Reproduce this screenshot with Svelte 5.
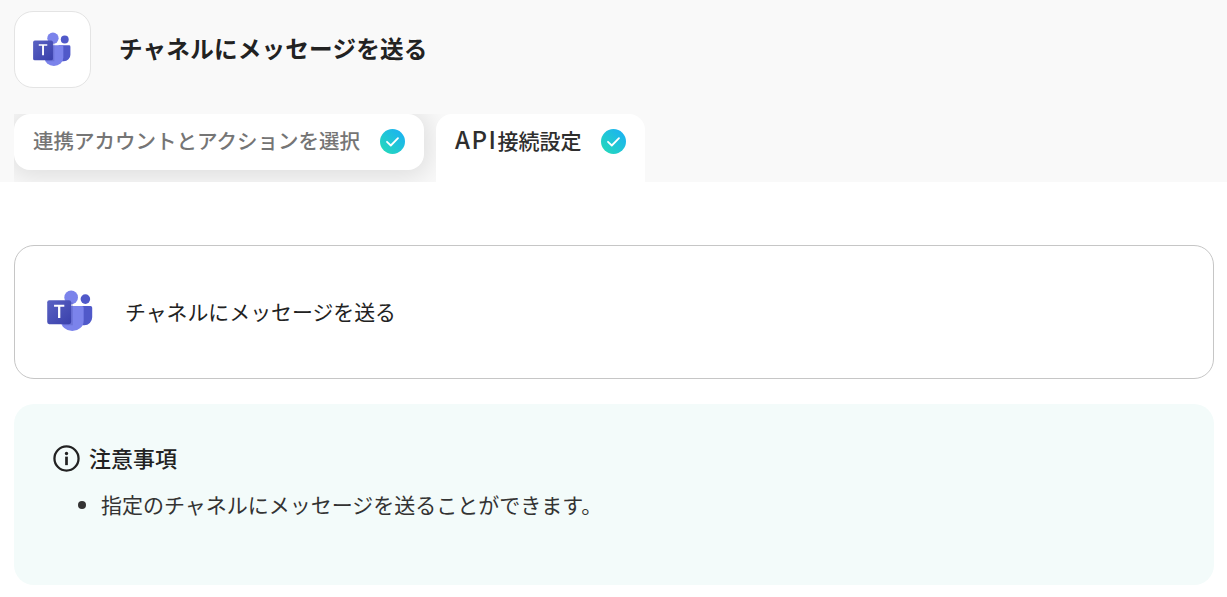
<script>
  const title = 'チャネルにメッセージを送る';
</script>

{#snippet teams()}
  <svg class="teams" viewBox="0 0 40 36" aria-hidden="true">
    <defs>
      <linearGradient id="tile" x1="0" y1="0" x2="1" y2="1">
        <stop offset="0" stop-color="#5a62c3" />
        <stop offset="1" stop-color="#3940ab" />
      </linearGradient>
    </defs>
    <circle cx="33.5" cy="8" r="4.2" fill="#5059c9" />
    <path d="M27 14h11a1.5 1.5 0 0 1 1.5 1.5V24a7 7 0 0 1-7 7H27z" fill="#5059c9" />
    <circle cx="21" cy="6.5" r="6" fill="#7b83eb" />
    <path d="M13 14h17.5a1.5 1.5 0 0 1 1.5 1.5V27a10 9 0 0 1-20 0V15z" fill="#7b83eb" />
    <path d="M12 11h10.5v20H14z" fill="#4a50ac" opacity="0.3" />
    <rect x="0" y="9" width="21" height="21" rx="1.8" fill="url(#tile)" />
    <path d="M15 14.6H11.5V24.5H9.5V14.6H6V13H15z" fill="#fff" />
  </svg>
{/snippet}

{#snippet check()}
  <svg class="check" viewBox="0 0 25 25" aria-hidden="true">
    <defs>
      <linearGradient id="tick" x1="0" y1="1" x2="1" y2="0">
        <stop offset="0.1" stop-color="#24d8bc" />
        <stop offset="0.9" stop-color="#1bb2f2" />
      </linearGradient>
    </defs>
    <circle cx="12.5" cy="12.5" r="12.5" fill="url(#tick)" />
    <path d="M7 12.8l3.8 3.7 7.2-7.4" fill="none" stroke="#fff" stroke-width="1.8" stroke-linecap="round" stroke-linejoin="round" />
  </svg>
{/snippet}

<header class="head">
  <div class="title-row">
    <div class="logo">{@render teams()}</div>
    <h1>{title}</h1>
  </div>
  <div class="tabs">
    <div class="tab">
      <span>連携アカウントとアクションを選択</span>
      {@render check()}
    </div>
    <div class="tab active">
      <span><span class="latin">API</span>接続設定</span>
      {@render check()}
    </div>
  </div>
</header>

<main class="body">
  <section class="action">
    {@render teams()}
    <p>{title}</p>
  </section>

  <section class="notice">
    <h2>
      <svg class="info" viewBox="0 0 26 26" aria-hidden="true">
        <circle cx="13" cy="13" r="11.6" fill="none" stroke="#222" stroke-width="2.2" />
        <circle cx="13" cy="8.2" r="1.6" fill="#222" />
        <rect x="11.7" y="11.2" width="2.6" height="8.2" fill="#222" />
      </svg>
      注意事項
    </h2>
    <ul>
      <li>指定のチャネルにメッセージを送ることができます。</li>
    </ul>
  </section>
</main>

<style>
  :global(body) {
    margin: 0;
    background: #fff;
    color: #2a2a2a;
    font-family: "Noto Sans CJK JP", "Noto Sans", sans-serif;
  }

  .head {
    height: 182px;
    padding: 11px 14px 0;
    box-sizing: border-box;
    background: #f9f9f9;
  }

  .title-row {
    display: flex;
    align-items: center;
    gap: 28px;
  }

  .logo {
    display: flex;
    align-items: center;
    justify-content: center;
    width: 77px;
    height: 77px;
    box-sizing: border-box;
    background: #fff;
    border: 1px solid #e4e4e4;
    border-radius: 19px;
  }

  .logo .teams {
    width: 38px;
    height: 34px;
    margin: 0 2px 2px 0;
  }

  h1 {
    margin: 0 0 4px;
    font-size: 23.6px;
    letter-spacing: 0.2px;
    font-weight: 700;
    color: #222;
  }

  .tabs {
    display: flex;
    align-items: flex-start;
    gap: 12px;
    height: 68px;
    margin-top: 26px;
    overflow: hidden;
  }

  .tab {
    display: flex;
    align-items: center;
    gap: 20px;
    height: 56px;
    padding: 0 19px;
    box-sizing: border-box;
    background: #fff;
    border-radius: 16px;
    font-size: 20.5px;
    font-weight: 500;
    color: #757575;
    box-shadow: 0 2px 24px 6px rgba(0, 0, 0, 0.1);
  }

  .tab > span {
    padding-bottom: 4px;
  }

  .tab.active {
    position: relative;
    height: 68px;
    padding: 0 19px 12px;
    border-radius: 16px 16px 0 0;
    font-size: 21px;
    color: #2e2e2e;
    box-shadow: none;
  }

  .latin {
    font-size: 24px;
    line-height: 1;
    letter-spacing: 1.5px;
  }

  .check {
    width: 25px;
    height: 25px;
    flex: none;
    margin-bottom: 2px;
  }

  .body {
    display: flex;
    flex-direction: column;
    gap: 25px;
    padding: 63px 13px 12px 14px;
  }

  .action {
    display: flex;
    align-items: center;
    gap: 32px;
    height: 134px;
    padding-left: 32px;
    box-sizing: border-box;
    border: 1px solid #c6c6c6;
    border-radius: 20px;
  }

  .action .teams {
    width: 46px;
    height: 41px;
    margin-bottom: 3px;
  }

  .action p {
    margin: 0 0 2px;
    font-size: 20.9px;
    color: #222;
  }

  .notice {
    height: 181px;
    padding: 37px 39px 0;
    box-sizing: border-box;
    background: #f3fbfa;
    border-radius: 20px;
  }

  h2 {
    display: flex;
    align-items: center;
    gap: 9px;
    margin: 0;
    font-size: 22px;
    font-weight: 500;
    color: #222;
  }

  .info {
    width: 27px;
    height: 27px;
    margin-top: 2px;
  }

  ul {
    margin: 16px 0 0;
    padding-left: 48px;
    font-size: 21px;
    color: #333;
  }
</style>
